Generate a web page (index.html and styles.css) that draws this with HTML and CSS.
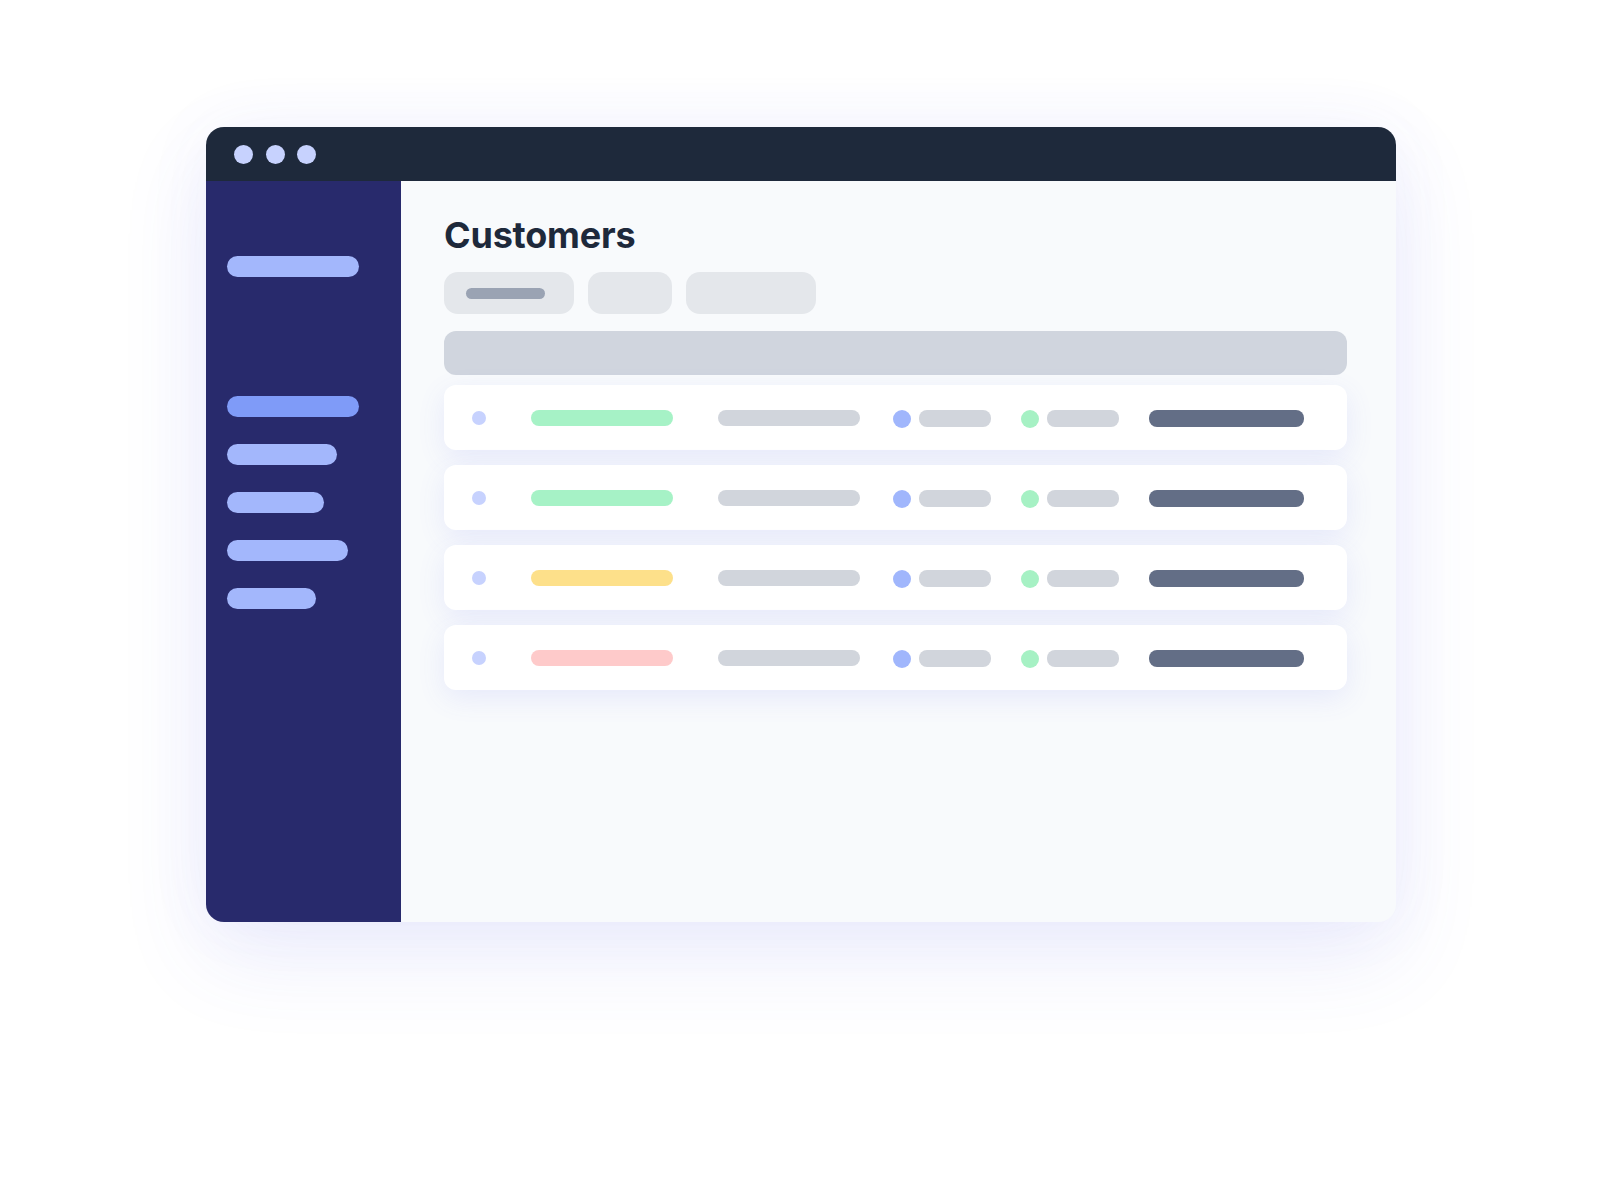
FILE: index.html
```html
<!DOCTYPE html>
<html lang="en">
<head>
<meta charset="utf-8">
<title>Customers</title>
<link rel="stylesheet" href="styles.css">
</head>
<body>
<div class="stage">
  <div class="window">
    <div class="titlebar">
      <span class="dot"></span><span class="dot"></span><span class="dot"></span>
    </div>
    <div class="body">
      <aside class="sidebar">
        <div class="logo-bar"></div>
        <nav class="nav">
          <div class="nav-bar active w132"></div>
          <div class="nav-bar w110"></div>
          <div class="nav-bar w97"></div>
          <div class="nav-bar w121"></div>
          <div class="nav-bar w89"></div>
        </nav>
      </aside>
      <main class="main">
        <h1 class="title">Customers</h1>
        <div class="tabs">
          <div class="tab tab-wide"><span class="tab-label"></span></div>
          <div class="tab tab-small"></div>
          <div class="tab tab-wide"></div>
        </div>
        <div class="table-head"></div>
        <div class="rows">
          <div class="row">
            <span class="row-dot"></span>
            <span class="pill name green"></span>
            <span class="pill email"></span>
            <span class="status-dot blue first"></span><span class="pill small"></span>
            <span class="status-dot mint"></span><span class="pill small"></span>
            <span class="pill action"></span>
          </div>
          <div class="row">
            <span class="row-dot"></span>
            <span class="pill name green"></span>
            <span class="pill email"></span>
            <span class="status-dot blue first"></span><span class="pill small"></span>
            <span class="status-dot mint"></span><span class="pill small"></span>
            <span class="pill action"></span>
          </div>
          <div class="row">
            <span class="row-dot"></span>
            <span class="pill name yellow"></span>
            <span class="pill email"></span>
            <span class="status-dot blue first"></span><span class="pill small"></span>
            <span class="status-dot mint"></span><span class="pill small"></span>
            <span class="pill action"></span>
          </div>
          <div class="row">
            <span class="row-dot"></span>
            <span class="pill name red"></span>
            <span class="pill email"></span>
            <span class="status-dot blue first"></span><span class="pill small"></span>
            <span class="status-dot mint"></span><span class="pill small"></span>
            <span class="pill action"></span>
          </div>
        </div>
      </main>
    </div>
  </div>
</div>
</body>
</html>
```

FILE: styles.css
```css
* { box-sizing: border-box; }
html, body {
  margin: 0;
  padding: 0;
  background: #ffffff;
  font-family: Inter, "Noto Sans", "Liberation Sans", sans-serif;
}
.stage {
  width: 1600px;
  height: 1204px;
  padding: 127px 0 0 206px;
  overflow: hidden;
}
.window {
  width: 1190px;
  height: 795px;
  border-radius: 18px;
  overflow: hidden;
  display: flex;
  flex-direction: column;
  background: #f8fafc;
  box-shadow: 0 34px 90px rgba(79, 90, 230, 0.11), 0 0 70px rgba(99, 102, 241, 0.05);
}
.titlebar {
  height: 54px;
  flex: none;
  background: #1e293b;
  display: flex;
  align-items: center;
  gap: 12.5px;
  padding: 0 0 0 28px;
}
.dot {
  width: 19px;
  height: 19px;
  border-radius: 50%;
  background: #c7d2fe;
}
.body {
  flex: 1;
  display: flex;
}
.sidebar {
  width: 195px;
  flex: none;
  background: #282a6c;
  padding: 75px 0 0 21px;
}
.logo-bar {
  width: 132px;
  height: 21px;
  border-radius: 11px;
  background: #a3b7fc;
}
.nav {
  margin-top: 119px;
  display: flex;
  flex-direction: column;
  gap: 27px;
}
.nav-bar {
  height: 21px;
  border-radius: 11px;
  background: #a3b7fc;
}
.nav-bar.active { background: #7f9bf8; }
.w132 { width: 132px; }
.w110 { width: 110px; }
.w97 { width: 97px; }
.w121 { width: 121px; }
.w89 { width: 89px; }

.main {
  flex: 1;
  padding: 32px 49px 0 43px;
}
.title {
  margin: 0;
  font-size: 36px;
  line-height: 44px;
  font-weight: 700;
  color: #1e293b;
  letter-spacing: -0.2px;
}
.tabs {
  margin-top: 15px;
  display: flex;
  gap: 14px;
}
.tab {
  height: 42px;
  border-radius: 14px;
  background: #e4e7eb;
  display: flex;
  align-items: center;
  padding-left: 22px;
}
.tab-wide { width: 130px; }
.tab-small { width: 84px; }
.tab-label {
  width: 79px;
  height: 11px;
  border-radius: 6px;
  background: #9aa3b3;
}
.table-head {
  margin-top: 17px;
  height: 44px;
  border-radius: 12px;
  background: #d0d5de;
}
.rows {
  margin-top: 10px;
  display: flex;
  flex-direction: column;
  gap: 15px;
}
.row {
  height: 65px;
  border-radius: 12px;
  background: #ffffff;
  display: flex;
  align-items: center;
  padding-left: 28px;
  box-shadow: 0 8px 28px rgba(90, 100, 235, 0.11);
}
.row-dot {
  width: 14px;
  height: 14px;
  border-radius: 50%;
  background: #c7d2fe;
  flex: none;
}
.pill {
  height: 16px;
  border-radius: 8px;
  background: #d1d5dc;
  flex: none;
}
.name { width: 142px; margin-left: 45px; }
.green { background: #a6f2c6; }
.yellow { background: #fde08a; }
.red { background: #fecaca; }
.email { width: 142px; margin-left: 45px; }
.status-dot {
  width: 18px;
  height: 18px;
  border-radius: 50%;
  flex: none;
  margin-left: 30px;
  margin-top: 2px;
}
.status-dot.first { margin-left: 33px; }
.blue { background: #a0b6fc; }
.mint { background: #a6f1c4; }
.small { width: 72px; height: 17px; margin-left: 8px; margin-top: 1px; }
.action {
  width: 155px;
  height: 17px;
  margin-left: 30px;
  margin-top: 1px;
  background: #636e86;
}
```
